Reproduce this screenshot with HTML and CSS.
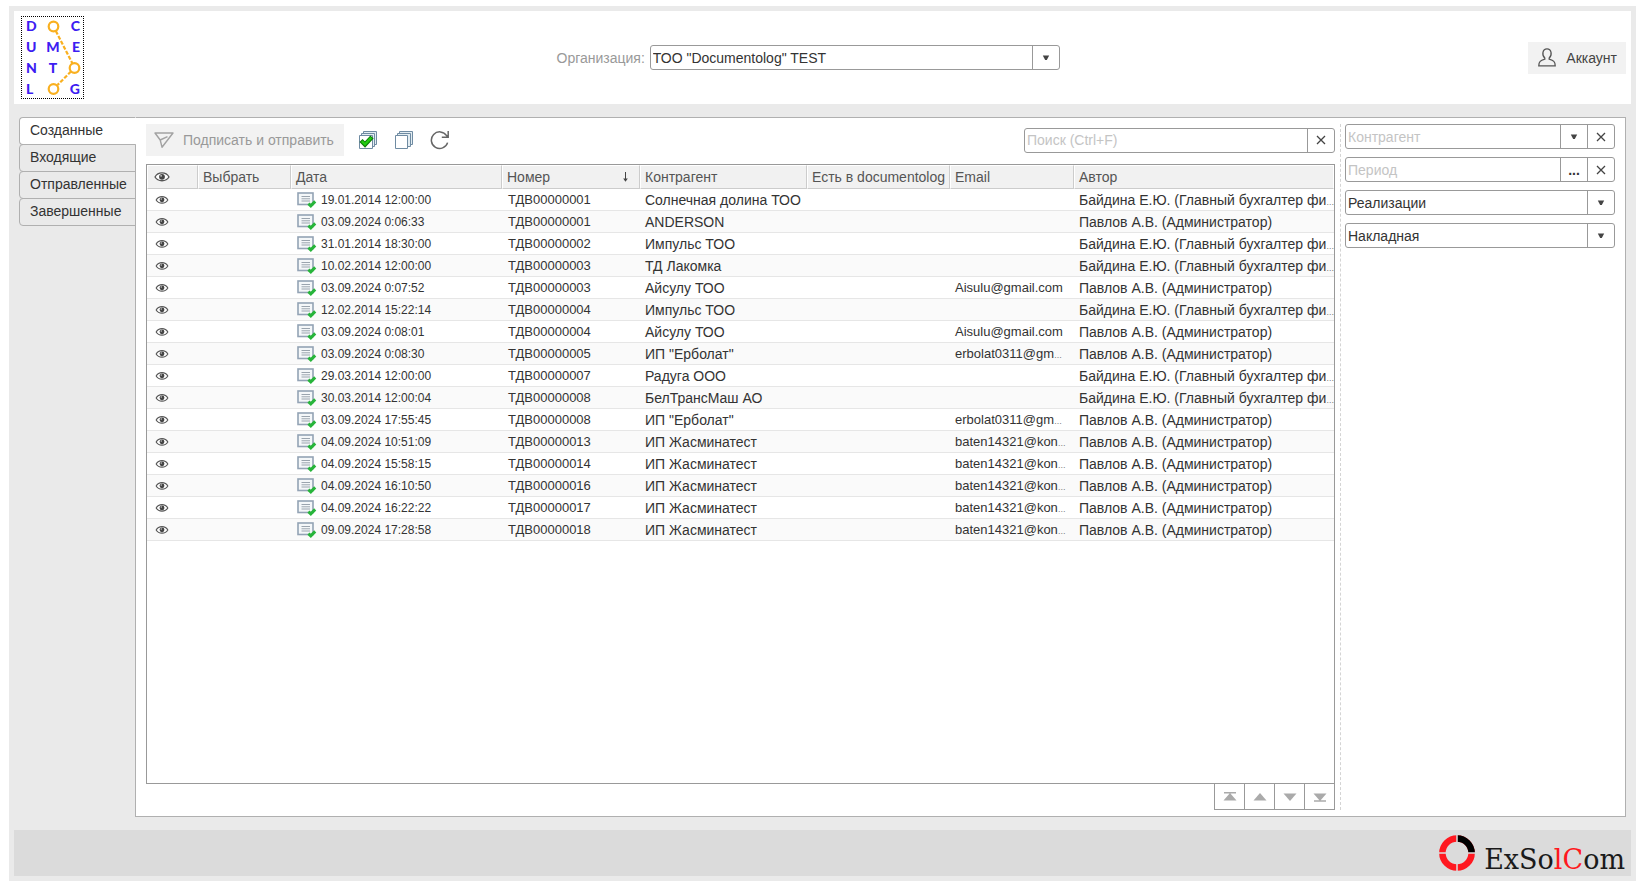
FILE: index.html
```html
<!DOCTYPE html>
<html lang="ru">
<head>
<meta charset="utf-8">
<title>Documentolog</title>
<link rel="stylesheet" href="styles.css">
</head>
<body>
<svg class="defs" aria-hidden="true">
  <symbol id="eye" viewBox="0 0 16 12">
    <path d="M1 6C4 .6 12 .6 15 6C12 11 4 11 1 6Z" fill="#fff" stroke="#555" stroke-width="1.3"/>
    <circle cx="8" cy="5.8" r="2.9" fill="#444"/>
    <circle cx="7.1" cy="4.8" r=".9" fill="#ccc"/>
  </symbol>
  <symbol id="doc" viewBox="0 0 20 16">
    <rect x="1" y="1" width="15" height="11.5" fill="#f4f7f9" stroke="#93a3b5" stroke-width="1.6"/>
    <path d="M4.5 4.5H13M4.5 6.8H13M4.5 9H13" stroke="#9aa4ae" stroke-width="1"/>
    <path d="M11.4 11.6L13.8 13.8L18.2 9.4" fill="none" stroke="#27b53a" stroke-width="3"/>
  </symbol>
  <symbol id="down" viewBox="0 0 8 8"><path d="M.8 1.5H7.2L4.8 6H3.2Z" fill="#444"/></symbol>
  <symbol id="cross" viewBox="0 0 10 10"><path d="M1 1L9 9M9 1L1 9" stroke="#444" stroke-width="1.3"/></symbol>
</svg>
<div class="frame">
  <header class="header">
    <svg class="logo" viewBox="1 1 61 81" role="img" aria-label="Documentolog">
      <g class="logo-text">
        <text x="5" y="15">D</text><text x="59" y="15" text-anchor="end">C</text>
        <text x="5" y="36">U</text><text x="32" y="36" text-anchor="middle">M</text><text x="59" y="36" text-anchor="end">E</text>
        <text x="5" y="57">N</text><text x="32" y="57" text-anchor="middle">T</text>
        <text x="5" y="78">L</text><text x="59" y="78" text-anchor="end">G</text>
      </g>
      <g fill="none" stroke="#f9b020" stroke-width="2.2">
        <circle cx="32.5" cy="10.5" r="4.8"/><circle cx="53.5" cy="52" r="4.8"/><circle cx="32.5" cy="73" r="4.8"/>
        <path d="M34.8 15L51.5 47.5M50 55.5L36.5 69" stroke-dasharray="4 1.6"/>
      </g>
    </svg>
    <div class="org">
      <label for="org">Организация:</label>
      <div class="field org-field">
        <select id="org"><option>ТОО "Documentolog" TEST</option></select>
        <span class="cell"><svg class="ic8"><use href="#down"/></svg></span>
      </div>
    </div>
    <button class="flat account" type="button">
      <svg width="18" height="19" viewBox="0 0 18 19" fill="none" stroke="#555" stroke-width="1.3"><path d="M6.8 11.2C2.5 12.6.8 13.4.8 17.8H17.2C17.2 13.4 15.5 12.6 11.2 11.2V10C14.4 7 13.6 .8 9 .8S3.6 7 6.8 10Z"/></svg>
      Аккаунт
    </button>
  </header>
  <main class="main">
    <nav class="tabs">
      <button class="tab active" type="button">Созданные</button>
      <button class="tab" type="button">Входящие</button>
      <button class="tab" type="button">Отправленные</button>
      <button class="tab" type="button">Завершенные</button>
    </nav>
    <div class="panel">
      <section class="list">
        <div class="toolbar">
          <button class="flat send" type="button" disabled>
            <svg width="20" height="16" viewBox="0 0 20 16" fill="none" stroke="#a2a2a2" stroke-width="1.4" stroke-linejoin="round"><path d="M1 1H19L8 15.2L6.2 8ZM1 1L6.2 8L13.5 4.6"/></svg>
            Подписать и отправить
          </button>
          <button class="icon-btn" type="button" aria-label="Выбрать все">
            <svg width="20" height="20" viewBox="0 0 20 20" stroke="#6f8ba2"><path d="M5.5 1.5H18.5V14.5H5.5Z" fill="#e3edf2"/><path d="M3.5 3.5H16.5V16.5H3.5Z" fill="#e3edf2"/><path d="M1.5 5.5H14.5V18.5H1.5Z" fill="#fff"/><path d="M3 10.5L7 14.5L14 7" fill="none" stroke="#0b7a0b" stroke-width="4.4"/><path d="M3.8 11.2L7 14.3L13.3 7.7" fill="none" stroke="#22cc11" stroke-width="2.4"/></svg>
          </button>
          <button class="icon-btn" type="button" aria-label="Снять выбор">
            <svg width="20" height="20" viewBox="0 0 20 20" stroke="#6f8ba2"><path d="M5.5 1.5H18.5V14.5H5.5Z" fill="#e3edf2"/><path d="M3.5 3.5H16.5V16.5H3.5Z" fill="#e3edf2"/><path d="M1.5 5.5H13.5V18.5H1.5Z" fill="#fff"/></svg>
          </button>
          <button class="icon-btn" type="button" aria-label="Обновить">
            <svg width="20" height="20" viewBox="0 0 20 20" fill="none" stroke="#666" stroke-width="1.5"><path d="M17.6 12.6A8.3 8.3 0 1 1 16.6 5.6L18 7.2M18.2 1V7.2H11.8"/></svg>
          </button>
          <div class="field search">
            <input type="text" aria-label="Поиск" placeholder="Поиск (Ctrl+F)">
            <button class="cell" type="button" aria-label="Очистить"><svg class="ic10"><use href="#cross"/></svg></button>
          </div>
        </div>
        <div class="grid">
          <table>
            <colgroup><col class="c-eye"><col class="c-pick"><col class="c-date"><col class="c-num"><col class="c-agent"><col class="c-has"><col class="c-mail"><col></colgroup>
            <thead><tr>
              <th class="view"><svg class="eye-lg"><use href="#eye"/></svg></th><th>Выбрать</th><th>Дата</th>
              <th><span class="sorted">Номер <svg width="7" height="12" viewBox="0 0 7 12" stroke="#444" fill="none"><path d="M3.5 1V10"/><path d="M1.2 7.5H5.8L3.5 10.8Z" fill="#444" stroke="none"/></svg></span></th>
              <th>Контрагент</th><th>Есть в documentolog</th><th>Email</th><th>Автор</th>
            </tr></thead>
            <tbody id="rows"></tbody>
          </table>
        </div>
        <div class="pager">
          <button type="button" aria-label="В начало"><svg width="14" height="10" viewBox="0 0 14 10" fill="#aaa"><path d="M1 0H13V1.4H1ZM7 1L13.5 8.5H.5Z"/></svg></button>
          <button type="button" aria-label="Вверх"><svg width="14" height="10" viewBox="0 0 14 10" fill="#aaa"><path d="M7 1L13.5 8.5H.5Z"/></svg></button>
          <button type="button" aria-label="Вниз"><svg width="14" height="10" viewBox="0 0 14 10" fill="#aaa"><path d="M.5 1.5H13.5L7 9Z"/></svg></button>
          <button type="button" aria-label="В конец"><svg width="14" height="10" viewBox="0 0 14 10" fill="#aaa"><path d="M.5 1.5H13.5L7 9ZM1 8.3H13V9.7H1Z"/></svg></button>
        </div>
      </section>
      <aside class="filters">
        <div class="field">
          <input type="text" aria-label="Контрагент" placeholder="Контрагент">
          <button class="cell" type="button" aria-label="Выбрать"><svg class="ic8"><use href="#down"/></svg></button>
          <button class="cell" type="button" aria-label="Очистить"><svg class="ic10"><use href="#cross"/></svg></button>
        </div>
        <div class="field">
          <input type="text" aria-label="Период" placeholder="Период">
          <button class="cell dots" type="button">...</button>
          <button class="cell" type="button" aria-label="Очистить"><svg class="ic10"><use href="#cross"/></svg></button>
        </div>
        <div class="field">
          <select aria-label="Операция"><option>Реализации</option></select>
          <span class="cell"><svg class="ic8"><use href="#down"/></svg></span>
        </div>
        <div class="field">
          <select aria-label="Документ"><option>Накладная</option></select>
          <span class="cell"><svg class="ic8"><use href="#down"/></svg></span>
        </div>
      </aside>
    </div>
  </main>
  <footer class="footer">
    <svg width="36" height="36" viewBox="0 0 36 36" fill="none" stroke-width="6.5">
      <circle cx="18" cy="18" r="14.6" stroke="#ff1820"/>
      <path d="M18 3.4A14.6 14.6 0 0 1 32.6 18" stroke="#000"/>
      <path d="M18 0V8M18 28V36M0 18H8M28 18H36" stroke="#dbdbdb" stroke-width="1.5"/>
    </svg>
    <span class="brand">ExSo<span class="red">lC</span>om</span>
  </footer>
</div>
<script src="rows.js"></script>
</body>
</html>
```
FILE: rows.js
```js
const more = '<span class="more">…</span>';
const chief = 'Байдина Е.Ю. (Главный бухгалтер фи' + more;
const admin = 'Павлов А.В. (Администратор)';
const data = [
  ['19.01.2014 12:00:00', '01', 'Солнечная долина ТОО', '', chief],
  ['03.09.2024 0:06:33', '01', 'ANDERSON', '', admin],
  ['31.01.2014 18:30:00', '02', 'Импульс ТОО', '', chief],
  ['10.02.2014 12:00:00', '03', 'ТД Лакомка', '', chief],
  ['03.09.2024 0:07:52', '03', 'Айсулу ТОО', 'Aisulu@gmail.com', admin],
  ['12.02.2014 15:22:14', '04', 'Импульс ТОО', '', chief],
  ['03.09.2024 0:08:01', '04', 'Айсулу ТОО', 'Aisulu@gmail.com', admin],
  ['03.09.2024 0:08:30', '05', 'ИП "Ерболат"', 'erbolat0311@gm' + more, admin],
  ['29.03.2014 12:00:00', '07', 'Радуга ООО', '', chief],
  ['30.03.2014 12:00:04', '08', 'БелТрансМаш АО', '', chief],
  ['03.09.2024 17:55:45', '08', 'ИП "Ерболат"', 'erbolat0311@gm' + more, admin],
  ['04.09.2024 10:51:09', '13', 'ИП Жасминатест', 'baten14321@kon' + more, admin],
  ['04.09.2024 15:58:15', '14', 'ИП Жасминатест', 'baten14321@kon' + more, admin],
  ['04.09.2024 16:10:50', '16', 'ИП Жасминатест', 'baten14321@kon' + more, admin],
  ['04.09.2024 16:22:22', '17', 'ИП Жасминатест', 'baten14321@kon' + more, admin],
  ['09.09.2024 17:28:58', '18', 'ИП Жасминатест', 'baten14321@kon' + more, admin]
];
document.getElementById('rows').innerHTML = data.map(([date, num, agent, mail, author]) => `<tr>
  <td class="view"><svg class="eye-sm"><use href="#eye"/></svg></td><td></td>
  <td class="when"><span class="date"><svg class="doc"><use href="#doc"/></svg>${date}</span></td>
  <td class="num">ТДВ000000${num}</td><td>${agent}</td><td></td><td class="mail">${mail}</td><td>${author}</td></tr>`).join('');
```
FILE: styles.css
```css
* { box-sizing: border-box; }
body {
  margin: 0;
  padding: 6px 8px 1px 9px;
  min-height: 100vh;
  display: flex;
  background: #fff;
  color: #333;
  font: 14px/16px "Liberation Sans", Arial, sans-serif;
}
button, input, select { font: inherit; color: inherit; margin: 0; border: 0; background: none; border-radius: 0; }
button { padding: 0; }
svg { display: block; flex: none; }
.defs { display: none; }

.frame { flex: 1; min-width: 0; display: flex; flex-direction: column; padding: 5px; background: #eaeaea; }

.header { height: 93px; padding: 0 5px 0 7px; display: flex; align-items: center; justify-content: space-between; background: #fff; }
.logo { width: 63px; height: 83px; border: 1px dotted #000; }
.logo-text { font: 900 14px Lato, sans-serif; fill: #3d1df2; }
.org { display: flex; align-items: center; gap: 5px; margin-left: 4px; color: #999; }
.org-field { width: 410px; }
.flat { height: 32px; display: flex; align-items: center; background: #f2f2f2; }
.account { gap: 10px; padding: 0 9px 0 10px; color: #444; }

.field { height: 25px; display: flex; border: 1px solid #999; border-radius: 3px; background: #fff; color: #333; }
.field input, .field select { flex: 1; min-width: 0; height: 23px; padding: 0 2px; appearance: none; outline: 0; }
.field input::placeholder { color: #c4c4c4; opacity: 1; }
.cell { width: 27px; display: flex; align-items: center; justify-content: center; border-left: 1px solid #999; }
.dots { font-weight: bold; }
.ic8 { width: 8px; height: 8px; }
.ic10 { width: 10px; height: 10px; }

.main { flex: 1; display: flex; padding: 13px 5px; }
.tabs { width: 117px; margin-right: -1px; display: flex; flex-direction: column; z-index: 1; }
.tab { height: 28px; margin-bottom: -1px; padding: 0 0 2px 10px; text-align: left; border: 1px solid #b0b0b0; border-radius: 4px 0 0 4px; }
.tab.active { background: #fff; border-right-color: #fff; }

.panel { flex: 1; min-width: 0; display: flex; padding: 6px 10px; background: #fff; border: 1px solid #b0b0b0; }
.list { flex: 1; min-width: 0; display: flex; flex-direction: column; padding-right: 5px; border-right: 1px dashed #d4d4d4; }
.filters { width: 274px; padding-left: 4px; display: flex; flex-direction: column; gap: 8px; }

.toolbar { display: flex; align-items: center; margin-bottom: 8px; }
.send { gap: 9px; padding: 0 10px 0 8px; margin-right: 14px; color: #999; }
.icon-btn { margin-right: 16px; }
.search { width: 311px; margin-left: auto; }

.grid { flex: 1; border: 1px solid #999; }
table { width: 100%; table-layout: fixed; border-collapse: separate; border-spacing: 0; }
.c-eye { width: 51px; }
.c-pick { width: 93px; }
.c-date { width: 211px; }
.c-num { width: 138px; }
.c-agent { width: 167px; }
.c-has { width: 143px; }
.c-mail { width: 124px; }
th, td { padding: 0 0 0 5px; text-align: left; white-space: nowrap; font-weight: normal; }
th { height: 24px; color: #555; background: #f1f1f1; border: 1px solid #fff; border-right-color: #ccc; border-bottom-color: #ccc; padding: 0 0 1px 4px; }
th:last-child { border-right-color: #fff; }
td { height: 22px; border-bottom: 1px solid #e6e6e6; }
tbody tr:nth-child(even) { background: #fafafa; }
th.view { padding-left: 6px; }
td.view { padding-left: 8px; }
.eye-lg { width: 16px; height: 12px; }
.eye-sm { width: 14px; height: 10px; }
.sorted { display: flex; justify-content: space-between; align-items: center; padding-right: 10px; }
.when { padding-left: 6px; }
.date { display: flex; align-items: center; gap: 4px; font-size: 12px; }
.doc { width: 20px; height: 16px; }
.num { font-size: 13px; padding-left: 6px; }
.mail { font-size: 13px; }
.more { font-size: 8px; line-height: 8px; }

.pager { display: flex; justify-content: flex-end; margin-top: -1px; }
.pager button { width: 31px; height: 27px; margin-left: -1px; display: flex; align-items: center; justify-content: center; border: 1px solid #999; }

.footer { height: 46px; padding-right: 6px; display: flex; align-items: center; justify-content: flex-end; gap: 9px; background: #dbdbdb; }
.brand { font: 27px/30px "DejaVu Serif", serif; color: #1a1a1a; padding-top: 14px; }
.red { color: #ff1820; }
```
